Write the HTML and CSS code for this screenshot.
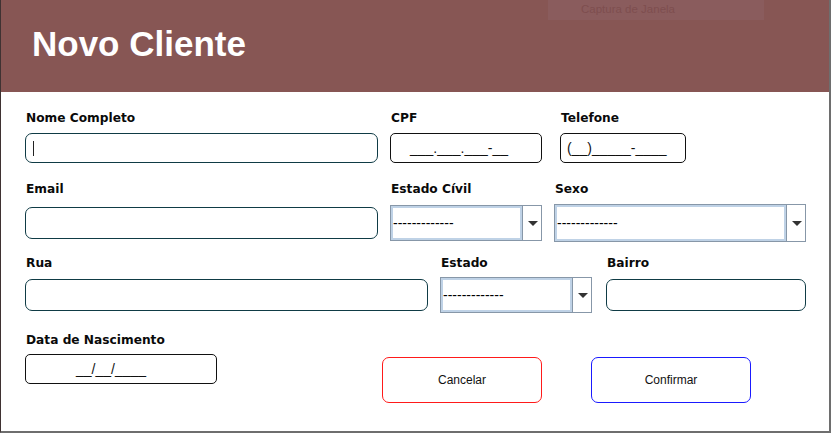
FILE: index.html
```html
<!DOCTYPE html>
<html lang="pt-BR">
<head>
<meta charset="utf-8">
<title>Novo Cliente</title>
<link rel="stylesheet" href="styles.css">
</head>
<body>
<div class="window">
  <header class="header">
    <h1 class="title">Novo Cliente</h1>
    <div class="capture-tip">Captura de Janela</div>
  </header>
  <main class="form">
    <div class="row row1">
      <div class="field w-nome">
        <label class="label">Nome Completo</label>
        <div class="input input-teal h30"><span class="caret"></span></div>
      </div>
      <div class="field w-152">
        <label class="label">CPF</label>
        <div class="input input-black h30 mask mask-cpf">___.___.___-__</div>
      </div>
      <div class="field w-tel">
        <label class="label">Telefone</label>
        <div class="input input-black h30 mask mask-tel">(__)_____-____</div>
      </div>
    </div>

    <div class="row row2">
      <div class="field w-nome">
        <label class="label">Email</label>
        <div class="input input-teal h32 mt10"></div>
      </div>
      <div class="field w-152">
        <label class="label">Estado Cívil</label>
        <div class="combo mt8">
          <div class="combo-value">-------------</div>
          <div class="combo-arrow"><span class="tri"></span></div>
        </div>
      </div>
      <div class="field w-sexo">
        <label class="label">Sexo</label>
        <div class="combo combo-big">
          <div class="combo-value">-------------</div>
          <div class="combo-arrow"><span class="tri"></span></div>
        </div>
      </div>
    </div>

    <div class="row row3">
      <div class="field w-rua">
        <label class="label">Rua</label>
        <div class="input input-teal h32 mt8"></div>
      </div>
      <div class="field w-152">
        <label class="label">Estado</label>
        <div class="combo mt6">
          <div class="combo-value">-------------</div>
          <div class="combo-arrow"><span class="tri"></span></div>
        </div>
      </div>
      <div class="field w-bairro">
        <label class="label">Bairro</label>
        <div class="input input-teal h32 mt8"></div>
      </div>
    </div>

    <div class="row row4">
      <div class="field w-data">
        <label class="label">Data de Nascimento</label>
        <div class="input input-black h30 mt6 mask mask-data">__/__/____</div>
      </div>
      <button class="btn btn-cancel" type="button">Cancelar</button>
      <button class="btn btn-confirm" type="button">Confirmar</button>
    </div>
  </main>
</div>
</body>
</html>
```

FILE: styles.css
```css
* { box-sizing: border-box; }

html, body {
  margin: 0;
  padding: 0;
  background: #ffffff;
}

body {
  font-family: "Liberation Sans", Arial, sans-serif;
  color: #000;
}

.window {
  position: relative;
  width: 831px;
  height: 433px;
  border-left: 1px solid #3f3232;
  border-right: 2px solid #6e6e6e;
  border-bottom: 2px solid #6e6e6e;
  background: #fff;
  overflow: hidden;
}

.window::after {
  content: "";
  position: absolute;
  left: 0;
  bottom: -2px;
  width: 132px;
  height: 2px;
  background: #3f3232;
}

.header {
  position: relative;
  height: 92px;
  background: #875654;
  padding: 24px 0 0 31px;
}

.title {
  margin: 0;
  font-size: 35px;
  line-height: 40px;
  font-weight: bold;
  color: #ffffff;
}

.capture-tip {
  position: absolute;
  top: 0;
  left: 547px;
  width: 216px;
  height: 20px;
  background: #8a5c5d;
  color: #7e4e4f;
  font-size: 11.5px;
  line-height: 18px;
  padding-left: 33px;
}

.form {
  padding: 19px 0 0 24px;
}

.row {
  display: flex;
  align-items: flex-start;
}

.row2 { margin-top: 19px; }
.row3 { margin-top: 14px; }
.row4 { margin-top: 20px; }

.field {
  display: flex;
  flex-direction: column;
}

.label {
  display: block;
  font-family: "DejaVu Sans", Verdana, sans-serif;
  font-size: 12.2px;
  line-height: 15px;
  font-weight: bold;
  color: #0a0a0a;
  padding-left: 1px;
}

.row1 .input { margin-top: 7px; }

.w-nome { width: 353px; margin-right: 12px; }
.w-152 { width: 152px; }
.row1 .w-152 { margin-right: 18px; }
.row2 .w-152 { margin-right: 12px; }
.row3 .w-152 { margin-right: 14px; }
.w-tel { width: 126px; }
.w-sexo { width: 252px; }
.w-rua { width: 403px; margin-right: 12px; }
.w-bairro { width: 200px; }
.w-data { width: 192px; }

.input {
  width: 100%;
  background: #fff;
  display: flex;
  align-items: center;
}

.input-teal {
  border: 1px solid #0f3b45;
  border-radius: 7px;
}

.input-black {
  border: 1px solid #111;
  border-radius: 5px;
}

.h30 { height: 30px; }
.h32 { height: 32px; }
.mt6 { margin-top: 6px; }
.mt8 { margin-top: 8px; }
.mt10 { margin-top: 10px; }

.caret {
  display: block;
  width: 1px;
  height: 15px;
  margin-left: 7px;
  background: #222;
}

.mask {
  font-size: 14px;
  line-height: 16px;
  color: #111;
  white-space: pre;
}

.mask-cpf { padding-left: 19px; }
.mask-tel { padding-left: 6px; }
.mask-data { padding-left: 50px; }

.combo {
  display: flex;
  width: 100%;
  height: 36px;
  border: 1px solid #8797a8;
  background: #fff;
}

.combo-big {
  height: 38px;
  margin-top: 7px;
}

.combo-value {
  flex: 1;
  border: 2px solid #bfd2e6;
  display: flex;
  align-items: center;
  font-size: 14px;
  color: #000;
  white-space: pre;
  overflow: hidden;
}

.combo-arrow {
  width: 19px;
  border-left: 1px solid #8797a8;
  display: flex;
  align-items: center;
  justify-content: center;
}

.tri {
  display: block;
  width: 0;
  height: 0;
  border-left: 5px solid transparent;
  border-right: 5px solid transparent;
  border-top: 5px solid #333;
  margin-left: 1px;
}

.btn {
  width: 160px;
  height: 46px;
  background: #fff;
  border-radius: 7px;
  font-family: "Liberation Sans", Arial, sans-serif;
  font-size: 12px;
  color: #111;
  padding: 0;
  margin-top: 24px;
  cursor: pointer;
}

.btn-cancel {
  border: 1px solid #ff1a1a;
  margin-left: 165px;
}

.btn-confirm {
  border: 1px solid #1a1aff;
  margin-left: 49px;
}
```
